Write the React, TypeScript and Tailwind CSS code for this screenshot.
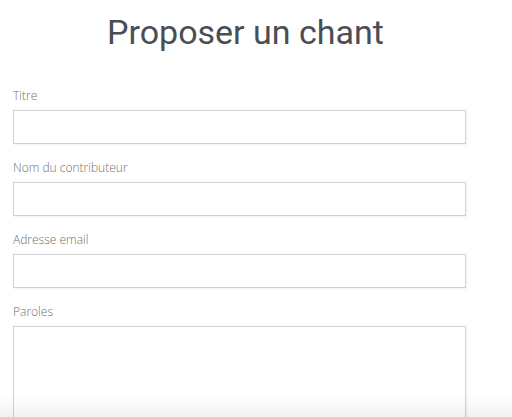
export default function App() {
  const fields = ["Titre", "Nom du contributeur", "Adresse email"];
  return (
    <div className="relative h-[417px] w-[512px] overflow-hidden bg-white">
      <div className="w-[478px] pl-[13px]">
        <h1 className="pt-[12px] text-center font-['Roboto'] text-[34px] leading-[40px] text-[#4a4e54]">
          Proposer un chant
        </h1>
        <form className="mt-[36px] flex flex-col">
          {fields.map((f) => (
            <div key={f} className="mb-[16px] flex flex-col">
              <label className="mb-[6px] font-['Open_Sans'] text-[12px] font-light leading-[16px] text-[#6f6f6f]">
                {f}
              </label>
              <input
                type="text"
                className="h-[34px] w-[453px] border border-[#d2d2d2] bg-white shadow-[1px_1px_2px_rgba(0,0,0,0.06)]"
              />
            </div>
          ))}
          <div className="flex flex-col">
            <label className="mb-[6px] font-['Open_Sans'] text-[12px] font-light leading-[16px] text-[#6f6f6f]">
              Paroles
            </label>
            <textarea className="h-[120px] w-[453px] resize-none border border-[#d2d2d2] bg-white shadow-[1px_1px_2px_rgba(0,0,0,0.06)]" />
          </div>
        </form>
      </div>
      <div className="pointer-events-none absolute bottom-0 left-0 h-[24px] w-full bg-gradient-to-b from-transparent to-[rgba(0,0,0,0.05)]" />
    </div>
  );
}
